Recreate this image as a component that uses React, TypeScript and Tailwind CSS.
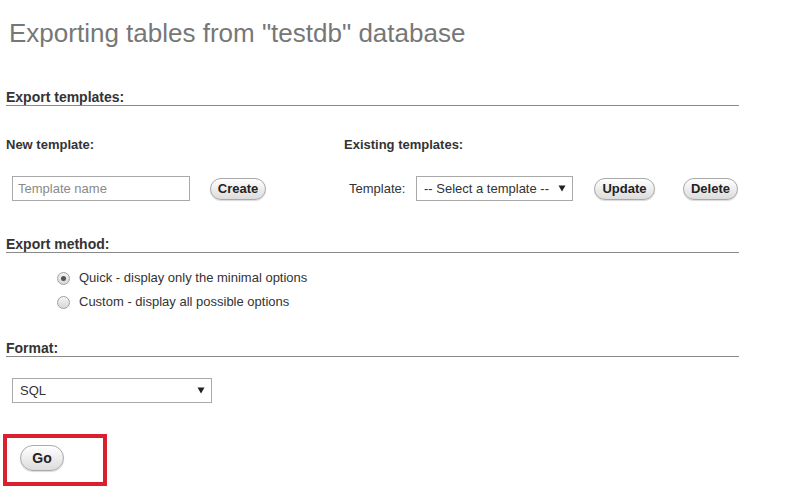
const font = { fontFamily: '"Liberation Sans", Arial, sans-serif' };

function Btn({ label, w, h = 22, size = 13 }: { label: string; w: number; h?: number; size?: number }) {
  return (
    <button
      className="flex shrink-0 items-center justify-center rounded-full border border-[#a9a9a9] bg-gradient-to-b from-[#ffffff] to-[#dcdcdc] font-bold text-[#222] shadow-[0_1px_1px_rgba(0,0,0,0.15)]"
      style={{ width: w, height: h, fontSize: size }}
    >
      {label}
    </button>
  );
}

function Caret() {
  return (
    <svg width="8" height="7" viewBox="0 0 8 7" className="shrink-0">
      <path d="M0.5 0.5 L7.5 0.5 L4 6.5 Z" fill="#222" />
    </svg>
  );
}

// section title with a rule under it
function Section({ children }: { children: string }) {
  return (
    <div className="h-[17px] border-b border-[#8a8a8a] text-[14px] leading-[16px] font-bold text-[#333]">
      {children}
    </div>
  );
}

function Label({ children }: { children: string }) {
  return <div className="h-[16px] text-[13px] leading-[16px] font-bold text-[#333]">{children}</div>;
}

function Radio({ checked, label }: { checked?: boolean; label: string }) {
  return (
    <div className="flex h-[24px] items-center pl-[51px]">
      <span className="flex h-[13px] w-[13px] items-center justify-center rounded-full border border-[#a0a0a0] bg-gradient-to-b from-[#f4f4f4] to-[#d8d8d8]">
        {checked && <span className="h-[5px] w-[5px] rounded-full bg-[#555]" />}
      </span>
      <span className="ml-[9px] text-[13px] text-[#333]">{label}</span>
    </div>
  );
}

export default function App() {
  return (
    <div className="h-[488px] w-[795px] overflow-hidden bg-white" style={font}>
      <div className="w-[739px] pl-[6px]">
        <h1 className="mt-[17px] h-[32px] pl-[3px] text-[26px] leading-[32px] font-normal text-[#777]">
          Exporting tables from "testdb" database
        </h1>

        <div className="mt-[40px]">
          <Section>Export templates:</Section>
        </div>

        <div className="mt-[31px] flex">
          <div className="w-[338px]">
            <Label>New template:</Label>
            <div className="mt-[23px] flex items-center pl-[6px]">
              <div className="flex h-[25px] w-[178px] items-center border border-[#a9a9a9] px-[5px] text-[13px] text-[#8a8a8a]">
                Template name
              </div>
              <div className="ml-[20px]">
                <Btn label="Create" w={56} />
              </div>
            </div>
          </div>
          <div className="flex-1">
            <Label>Existing templates:</Label>
            <div className="mt-[23px] flex items-center pl-[5px]">
              <span className="w-[67px] text-[13px] text-[#333]">Template:</span>
              <div className="flex h-[25px] w-[157px] items-center justify-between border border-[#a9a9a9] pr-[6px] pl-[7px] text-[13px] text-[#333]">
                <span>-- Select a template --</span>
                <Caret />
              </div>
              <div className="ml-[21px]">
                <Btn label="Update" w={61} />
              </div>
              <div className="ml-[28px]">
                <Btn label="Delete" w={55} />
              </div>
            </div>
          </div>
        </div>

        <div className="mt-[35px]">
          <Section>Export method:</Section>
        </div>
        <div className="mt-[13px]">
          <Radio checked label="Quick - display only the minimal options" />
          <Radio label="Custom - display all possible options" />
        </div>

        <div className="mt-[26px]">
          <Section>Format:</Section>
        </div>
        <div className="mt-[21px] pl-[6px]">
          <div className="flex h-[25px] w-[200px] items-center justify-between border border-[#a9a9a9] pr-[6px] pl-[7px] text-[13px] text-[#333]">
            <span>SQL</span>
            <Caret />
          </div>
        </div>

        <div className="mt-[31px] ml-[-3px] h-[52px] w-[104px] border-4 border-[#d9202e] pt-[7px] pl-[13px]">
          <Btn label="Go" w={44} h={26} size={14} />
        </div>
      </div>
    </div>
  );
}
